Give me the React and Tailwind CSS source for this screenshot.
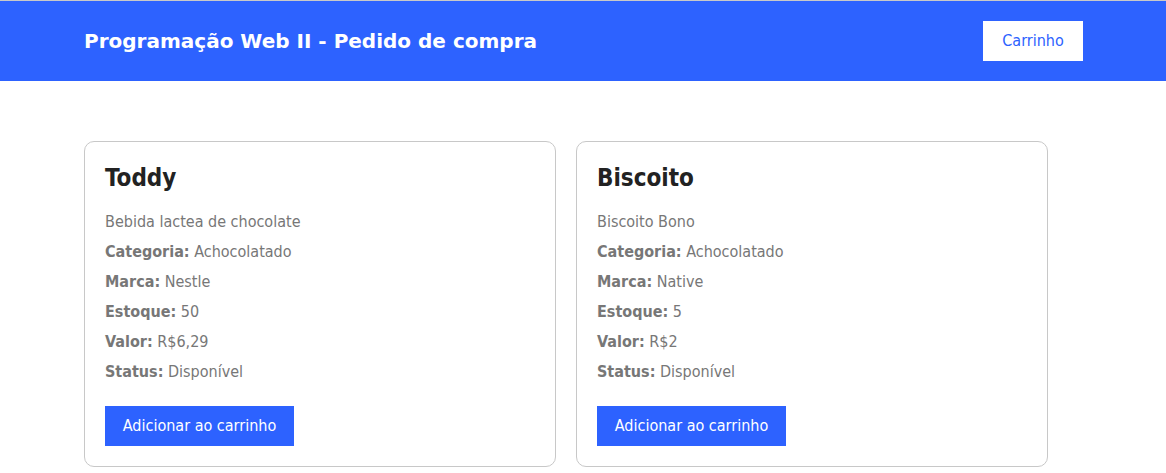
const products = [
  {
    id: 1,
    nome: "Toddy",
    descricao: "Bebida lactea de chocolate",
    categoria: "Achocolatado",
    marca: "Nestle",
    estoque: 50,
    valor: "R$6,29",
    status: "Disponível",
  },
  {
    id: 2,
    nome: "Biscoito",
    descricao: "Biscoito Bono",
    categoria: "Achocolatado",
    marca: "Native",
    estoque: 5,
    valor: "R$2",
    status: "Disponível",
  },
];

function Info({ label, value }) {
  return (
    <p className="leading-5">
      <span className="font-bold">{label}:</span> {value}
    </p>
  );
}

function ProductCard({ product }) {
  return (
    <div className="w-[472px] rounded-[10px] border border-[#c8c8c8] bg-white p-5">
      <h2 className="text-2xl font-bold leading-8 text-[#222]">{product.nome}</h2>
      <div className="mt-[18px] flex flex-col gap-[10px] text-base text-[#777]">
        <p className="leading-5">{product.descricao}</p>
        <Info label="Categoria" value={product.categoria} />
        <Info label="Marca" value={product.marca} />
        <Info label="Estoque" value={product.estoque} />
        <Info label="Valor" value={product.valor} />
        <Info label="Status" value={product.status} />
      </div>
      <button
        type="button"
        className="mt-[24px] h-10 w-[189px] bg-[#2d62ff] text-base text-white"
      >
        Adicionar ao carrinho
      </button>
    </div>
  );
}

export default function App() {
  return (
    <div
      className="min-h-screen border-t border-[#c9c9c9] bg-white"
      style={{ fontFamily: '"DejaVu Sans Condensed", "DejaVu Sans", Tahoma, sans-serif' }}
    >
      <header className="flex h-20 items-center justify-between bg-[#2d62ff] pl-[84px] pr-[83px]">
        <h1 className="font-['DejaVu_Sans',sans-serif] text-xl font-bold text-white">
          Programação Web II - Pedido de compra
        </h1>
        <button type="button" className="h-10 w-[100px] bg-white text-base text-[#2d62ff]">
          Carrinho
        </button>
      </header>
      <main className="flex gap-5 px-[84px] pt-[60px]">
        {products.map((p) => (
          <ProductCard key={p.id} product={p} />
        ))}
      </main>
    </div>
  );
}
